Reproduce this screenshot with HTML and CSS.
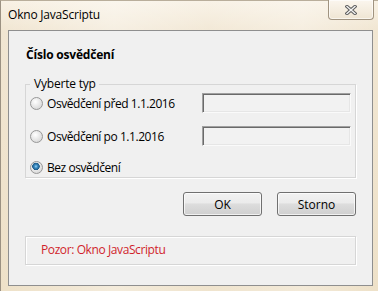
FILE: index.html
```html
<!DOCTYPE html>
<html lang="cs">
<head>
    <meta charset="UTF-8">
    <title>Okno JavaScriptu</title>
    <link rel="stylesheet" href="styles.css">
</head>
<body>
<div class="window">
    <div class="titlebar">
        <span class="title">Okno JavaScriptu</span>
        <a href="javascript:;" class="close">
            <svg width="12" height="10" viewBox="0 0 12 10">
                <path d="M2 1.5 L10 8.5 M10 1.5 L2 8.5" stroke="#5c5c5c" stroke-width="3.4" stroke-linecap="square" fill="none"/>
                <path d="M2 1.5 L10 8.5 M10 1.5 L2 8.5" stroke="#f4f4f4" stroke-width="1.4" stroke-linecap="square" fill="none"/>
            </svg>
        </a>
    </div>
    <div class="client">
        <div class="heading">Číslo osvědčení</div>
        <fieldset class="group">
            <legend>Vyberte typ</legend>
            <div class="row">
                <label><input type="radio" name="typ"> Osvědčení před 1.1.2016</label>
                <input type="text" class="field">
            </div>
            <div class="row">
                <label><input type="radio" name="typ"> Osvědčení po 1.1.2016</label>
                <input type="text" class="field">
            </div>
            <div class="row last">
                <label><input type="radio" name="typ" checked> Bez osvědčení</label>
            </div>
        </fieldset>
        <div class="buttons">
            <button class="btn">OK</button>
            <button class="btn">Storno</button>
        </div>
        <div class="status">Pozor: Okno JavaScriptu</div>
    </div>
</div>
</body>
</html>
```

FILE: styles.css
```css
*{
    padding: 0;
    margin: 0;
    box-sizing: border-box;
}
body{
    width: 378px;
    height: 291px;
    overflow: hidden;
    font-family: "Open Sans", "Noto Sans", sans-serif;
    font-size: 12px;
    color: #000;
    background: #efe4cf;
}
.window{
    width: 378px;
    height: 291px;
    display: flex;
    flex-direction: column;
    padding: 0 5px 5px 7px;
    border-left: 1px solid #9b9182;
    border-top: 1px solid #b9ae9b;
    background:
        linear-gradient(90deg, rgba(255,255,255,0) 0, rgba(255,255,255,.35) 30%, rgba(255,255,255,.1) 55%, rgba(255,255,255,.3) 80%, rgba(255,255,255,0) 100%),
        linear-gradient(#f8f1e4, #f1e6d2 30px, #eee1c8);
}
.titlebar{
    height: 29px;
    display: flex;
    align-items: flex-start;
    justify-content: space-between;
}
.title{
    margin-top: 6px;
    line-height: 16px;
    letter-spacing: -0.2px;
}
.close{
    width: 46px;
    height: 20px;
    margin-top: -1px;
    margin-right: -1px;
    display: flex;
    align-items: center;
    justify-content: center;
    border: 1px solid #a09380;
    border-top: none;
    border-radius: 0 0 4px 4px;
    background: linear-gradient(#fbf6ee, #efe5d3);
    box-shadow: inset 0 0 0 1px rgba(255,255,255,.6);
}
.client{
    flex: 1;
    display: flex;
    flex-direction: column;
    padding: 16px 16px 0 16px;
    background: #f0f0f0;
    border: 1px solid #8f8f8f;
}
.heading{
    font-weight: bold;
    line-height: 16px;
    padding-left: 1px;
    letter-spacing: -0.2px;
}
.group{
    margin-top: 13px;
    height: 102px;
    padding: 0 4px 0 4px;
    border: 1px solid #d6d6d6;
    box-shadow: 1px 1px 0 #fff;
}
.group legend{
    padding: 0 3px 0 4px;
    line-height: 16px;
    letter-spacing: -0.2px;
}
.row{
    height: 20px;
    margin-top: 13px;
    display: flex;
    align-items: center;
    justify-content: space-between;
    letter-spacing: -0.45px;
}
.row:first-of-type{
    margin-top: 1px;
}
.row.last{
    margin-top: 11px;
}
.row label{
    display: flex;
    align-items: center;
    gap: 4px;
}
input[type=radio]{
    appearance: none;
    width: 13px;
    height: 13px;
    border-radius: 50%;
    border: 1px solid #979797;
    background: radial-gradient(circle at 40% 35%, #ffffff 0, #e4e4e4 55%, #cfcfcf 100%);
}
input[type=radio]:checked{
    background:
        radial-gradient(circle at 45% 40%, #9ad6f6 0, #3f8fc6 1.5px, #1d5a87 3.5px, rgba(0,0,0,0) 4px),
        radial-gradient(circle at 40% 35%, #ffffff 0, #e4e4e4 55%, #cfcfcf 100%);
}
.field{
    width: 149px;
    height: 20px;
    border: 1px solid;
    border-color: #a0a0a0 #fafafa #fafafa #a0a0a0;
    box-shadow: inset 1px 1px #6a6a6a, inset -1px -1px #e6e6e6;
    background: #f2f2f2;
}
.buttons{
    margin-top: 14px;
    display: flex;
    justify-content: flex-end;
    gap: 15px;
}
.btn{
    width: 79px;
    height: 24px;
    font-family: "Open Sans", "Noto Sans", sans-serif;
    font-size: 12px;
    color: #000;
    border: 1px solid #707070;
    border-radius: 3px;
    background: linear-gradient(#f2f2f2 0, #ebebeb 45%, #dddddd 50%, #cfcfcf 100%);
    box-shadow: inset 0 0 0 1px rgba(255,255,255,.7);
}
.status{
    margin-top: 20px;
    height: 29px;
    padding: 5px 0 0 15px;
    line-height: 16px;
    color: #d01f2c;
    border: 1px solid #d6d6d6;
    box-shadow: 1px 1px 0 #fff, inset 1px 1px 0 #fff;
    letter-spacing: -0.4px;
}
```
